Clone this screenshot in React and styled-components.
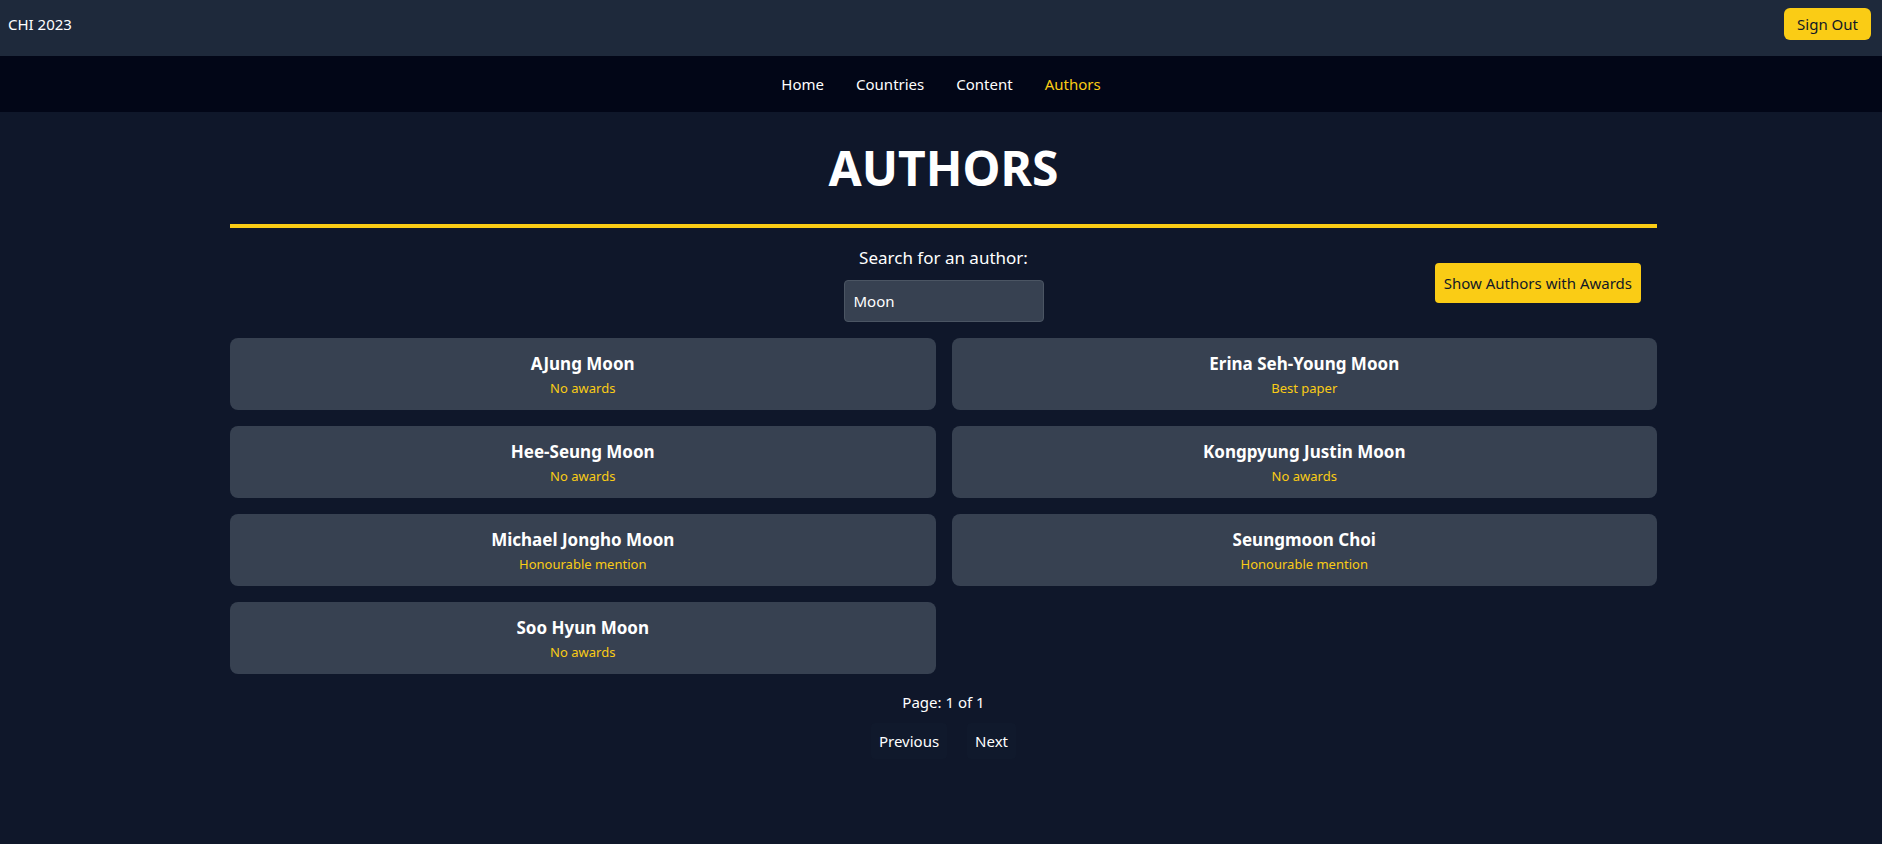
import styled, { createGlobalStyle } from 'styled-components'

const GlobalStyle = createGlobalStyle`
  * { box-sizing: border-box; }
  html, body {
    margin: 0;
    padding: 0;
    background: #0f172a;
    font-family: "Noto Sans", "Open Sans", sans-serif;
    color: #fff;
  }
`

const authors = [
  { name: 'AJung Moon', award: 'No awards' },
  { name: 'Erina Seh-Young Moon', award: 'Best paper' },
  { name: 'Hee-Seung Moon', award: 'No awards' },
  { name: 'Kongpyung Justin Moon', award: 'No awards' },
  { name: 'Michael Jongho Moon', award: 'Honourable mention' },
  { name: 'Seungmoon Choi', award: 'Honourable mention' },
  { name: 'Soo Hyun Moon', award: 'No awards' },
]

const Page = styled.div`
  min-height: 844px;
  background: #0f172a;
`

const Header = styled.header`
  height: 56px;
  display: flex;
  justify-content: space-between;
  align-items: flex-start;
  padding: 8px 11px 8px 8px;
  background: #1e293b;
`

const Brand = styled.div`
  font-size: 15px;
  line-height: 32px;
`

const YellowButton = styled.button`
  border: none;
  background: #facc15;
  color: #111827;
  font-family: inherit;
  font-size: 15px;
  line-height: 24px;
  padding: ${p => (p.$small ? '4px 13px' : '8px 9px')};
  border-radius: ${p => (p.$small ? '6px' : '4px')};
  cursor: pointer;
`

const Nav = styled.nav`
  height: 56px;
  display: flex;
  justify-content: center;
  align-items: center;
  background: #020617;
`

const NavLink = styled.a`
  padding: 0 16px;
  font-size: 15px;
  line-height: 24px;
  color: ${p => (p.$active ? '#facc15' : '#fff')};
  text-decoration: none;
`

const Main = styled.main`
  width: 1427px;
  margin: 0 0 0 230px;
  padding-top: 32px;
`

const Title = styled.h1`
  margin: 0;
  padding-bottom: 32px;
  border-bottom: 4px solid #facc15;
  text-align: center;
  font-size: 48px;
  line-height: 48px;
  font-weight: 700;
`

const Toolbar = styled.div`
  display: grid;
  grid-template-columns: 1fr auto 1fr;
  align-items: center;
  margin-top: 16px;
`

const SearchBox = styled.div`
  grid-column: 2;
  display: flex;
  flex-direction: column;
  align-items: center;
  gap: 8px;
`

const Label = styled.label`
  font-size: 17px;
  line-height: 28px;
`

const SearchInput = styled.input`
  width: 200px;
  height: 42px;
  padding: 0 9px;
  background: #374151;
  border: 1px solid #4b5563;
  border-radius: 4px;
  color: #fff;
  font-family: inherit;
  font-size: 15px;
  outline: none;
`

const ToolbarEnd = styled.div`
  grid-column: 3;
  justify-self: end;
  margin-right: 16px;
`

const Grid = styled.div`
  display: grid;
  grid-template-columns: 1fr 1fr;
  gap: 16px;
  margin-top: 16px;
`

const Card = styled.div`
  background: #374151;
  border-radius: 8px;
  padding: 12px;
  text-align: center;
`

const Name = styled.div`
  font-size: 17px;
  line-height: 28px;
  font-weight: 700;
`

const Award = styled.div`
  font-size: 13px;
  line-height: 20px;
  color: #facc15;
`

const PageInfo = styled.p`
  margin: 16px 0 0;
  text-align: center;
  font-size: 15px;
  line-height: 24px;
`

const Pager = styled.div`
  display: flex;
  justify-content: center;
  gap: 20px;
  margin-top: 9px;
`

const PagerButton = styled.button`
  border: none;
  background: #10192c;
  color: #fff;
  font-family: inherit;
  font-size: 15px;
  line-height: 24px;
  padding: 6px 8px;
  border-radius: 4px;
`

export default function App() {
  return (
    <Page>
      <GlobalStyle />
      <Header>
        <Brand>CHI 2023</Brand>
        <YellowButton $small>Sign Out</YellowButton>
      </Header>
      <Nav>
        <NavLink>Home</NavLink>
        <NavLink>Countries</NavLink>
        <NavLink>Content</NavLink>
        <NavLink $active>Authors</NavLink>
      </Nav>
      <Main>
        <Title>AUTHORS</Title>
        <Toolbar>
          <SearchBox>
            <Label>Search for an author:</Label>
            <SearchInput defaultValue="Moon" />
          </SearchBox>
          <ToolbarEnd>
            <YellowButton>Show Authors with Awards</YellowButton>
          </ToolbarEnd>
        </Toolbar>
        <Grid>
          {authors.map(a => (
            <Card key={a.name}>
              <Name>{a.name}</Name>
              <Award>{a.award}</Award>
            </Card>
          ))}
        </Grid>
        <PageInfo>Page: 1 of 1</PageInfo>
        <Pager>
          <PagerButton>Previous</PagerButton>
          <PagerButton>Next</PagerButton>
        </Pager>
      </Main>
    </Page>
  )
}
